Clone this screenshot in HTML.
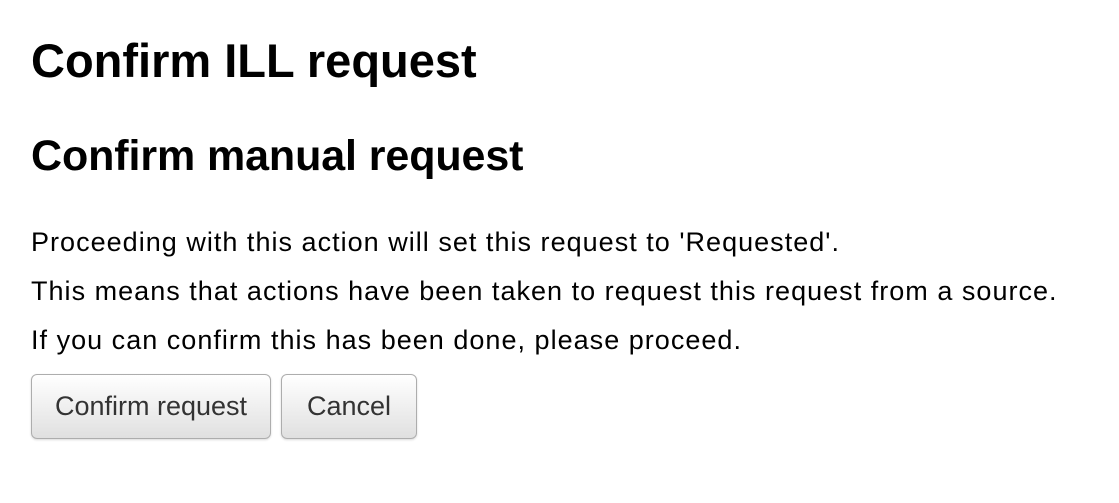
<!DOCTYPE html>
<html><head><meta charset="utf-8"><style>
body{margin:0;background:#fff;font-family:"Liberation Sans",Arial,sans-serif;color:#000;width:1119px;height:503px;overflow:hidden;position:relative}
.t{position:absolute;left:31px;white-space:nowrap;margin:0}
h1.t{font-size:47px;line-height:47px;top:37px;font-weight:bold}
h2.t{font-size:43px;line-height:43px;top:135px;font-weight:bold;letter-spacing:-0.1px}
p.t{font-size:27px;line-height:27px;letter-spacing:1.02px}
.b{position:absolute;top:374px;border:1px solid #adadad;border-radius:6px;background:linear-gradient(#fff,#e0e0e0);box-shadow:0 1px 2px rgba(0,0,0,.15);display:flex;align-items:center;justify-content:center;font-size:27px;color:#333;box-sizing:border-box;height:65px}
</style></head><body>
<h1 class="t">Confirm ILL request</h1>
<h2 class="t">Confirm manual request</h2>
<p class="t" style="top:229px">Proceeding with this action will set this request to 'Requested'.</p>
<p class="t" style="top:278px">This means that actions have been taken to request this request from a source.</p>
<p class="t" style="top:327px">If you can confirm this has been done, please proceed.</p>
<div class="b" style="left:31px;width:240px">Confirm request</div>
<div class="b" style="left:281px;width:136px">Cancel</div>
</body></html>
